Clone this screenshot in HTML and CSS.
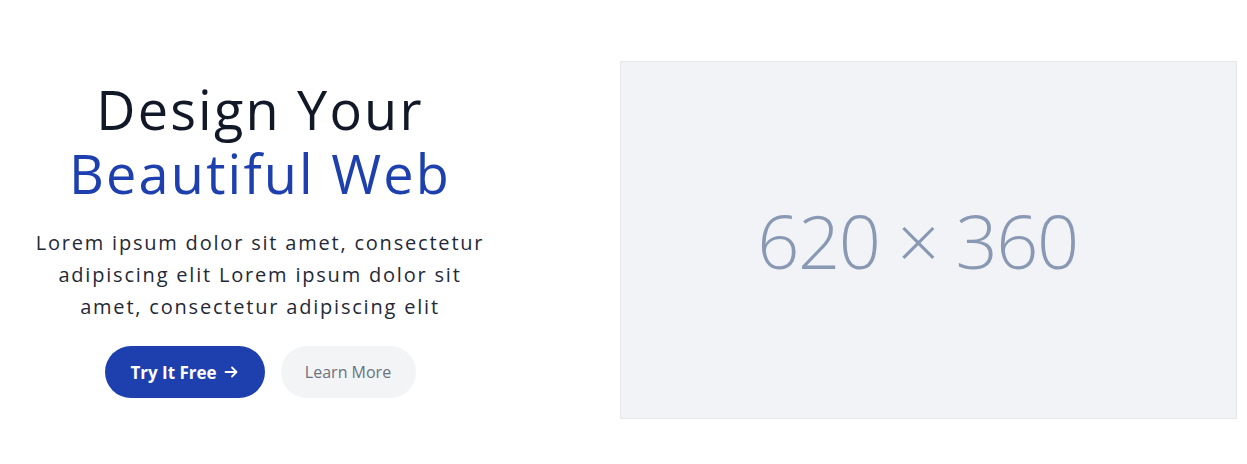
FILE: index.html
```html
<!DOCTYPE html>
<html lang="en">
<head>
<meta charset="utf-8">
<title>Hero</title>
<link rel="stylesheet" href="styles.css">
</head>
<body>
<section class="hero">
  <div class="hero-text">
    <h1 class="title">Design Your<br><span class="accent">Beautiful Web</span></h1>
    <p class="lead">Lorem ipsum dolor sit amet, consectetur adipiscing elit Lorem ipsum dolor sit amet, consectetur adipiscing elit</p>
    <div class="actions">
      <a class="btn btn-primary" href="#">Try It Free
        <svg class="arrow" viewBox="0 0 16 16" width="16" height="16" aria-hidden="true"><path d="M2.5 8h11M9 3.5 13.5 8 9 12.5" fill="none" stroke="currentColor" stroke-width="1.8" stroke-linecap="round" stroke-linejoin="round"/></svg>
      </a>
      <a class="btn btn-secondary" href="#">Learn More</a>
    </div>
  </div>
  <div class="hero-media">
    <div class="placeholder"><span>620 × 360</span></div>
  </div>
</section>
</body>
</html>
```

FILE: styles.css
```css
* { box-sizing: border-box; }
html, body { margin: 0; padding: 0; background: #ffffff; }
body { font-family: "Open Sans", "Noto Sans", sans-serif; color: #111827; }

.hero {
  display: flex;
  align-items: center;
  height: 464px;
  padding: 16px 10px 0 0;
}

.hero-text {
  width: 520px;
  margin-bottom: 5px;
  text-align: center;
  display: flex;
  flex-direction: column;
  align-items: center;
}

.title {
  margin: 0;
  font-weight: 500;
  font-size: 54px;
  line-height: 64px;
  color: #111827;
  letter-spacing: 2.2px;
}
.accent { color: #1e40af; }

.lead {
  margin: 22px 0 0;
  width: 472px;
  font-size: 20px;
  font-weight: 500;
  line-height: 32px;
  letter-spacing: 1.8px;
  color: #1f2937;
}

.actions {
  display: flex;
  gap: 16px;
  margin-top: 23px;
}

.btn {
  display: inline-flex;
  align-items: center;
  justify-content: center;
  height: 52px;
  border-radius: 26px;
  font-size: 17px;
  text-decoration: none;
}
.btn-primary {
  width: 160px;
  background: #1e40af;
  color: #ffffff;
  font-weight: 700;
  gap: 6px;
}
.btn-secondary {
  width: 135px;
  background: #f3f4f6;
  color: #6b7280;
  font-weight: 500;
  font-size: 16px;
}

.hero-media {
  margin-left: auto;
}
.placeholder {
  width: 617px;
  height: 358px;
  background: #f1f3f7;
  border: 1px solid #e5e7eb;
  display: flex;
  align-items: center;
  justify-content: center;
  padding-right: 22px;
}
.placeholder span {
  font-weight: 300;
  font-size: 74px;
  color: #8a99b3;
  letter-spacing: -1.5px;
}
```
